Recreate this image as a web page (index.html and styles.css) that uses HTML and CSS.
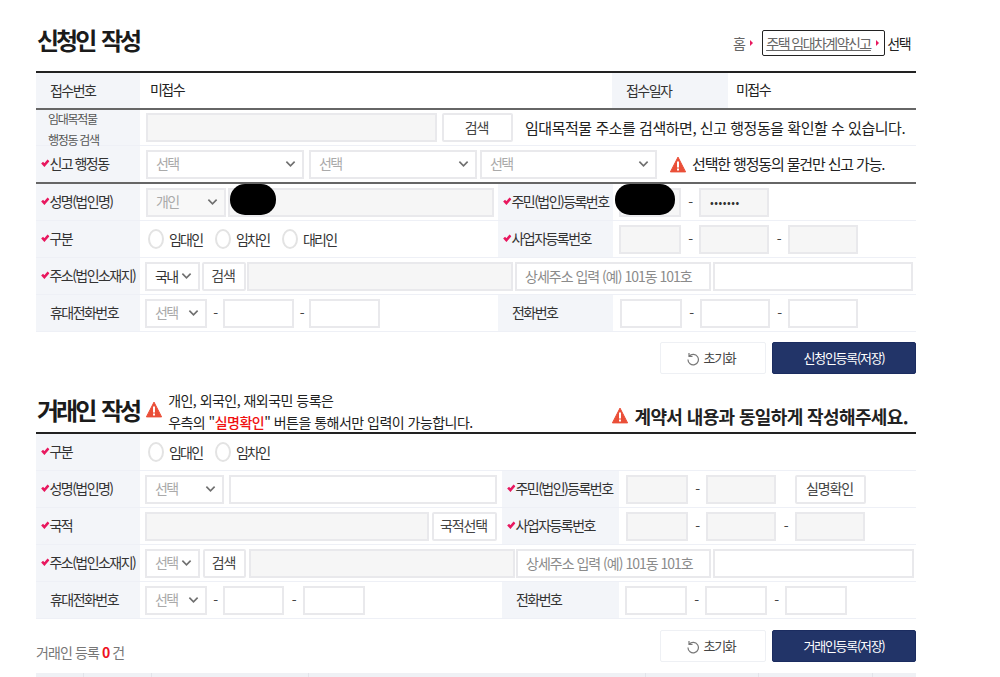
FILE: index.html
```html
<!DOCTYPE html>
<html lang="ko">
<head>
<meta charset="utf-8">
<title>신청인 작성</title>
<link rel="stylesheet" href="styles.css">
</head>
<body>
<svg class="defs" width="0" height="0" aria-hidden="true">
  <symbol id="chev" viewBox="0 0 12 8"><path d="M1.5 1.5 6 6l4.500-4.500" fill="none" stroke="#6f6f6f" stroke-width="1.800"/></symbol>
  <symbol id="chk" viewBox="0 0 10 9"><path d="M1.300 4 4 7 8.800 1.500" fill="none" stroke="#e8185f" stroke-width="3"/></symbol>
  <symbol id="warn" viewBox="0 0 16 16"><path d="M8 .6 15.600 15.400H.4Z" fill="#ea4f38" stroke="#ea4f38" stroke-linejoin="round"/><rect x="7" y="5" width="2" height="6" fill="#fff"/><rect x="7" y="12" width="2" height="2" fill="#fff"/></symbol>
  <symbol id="reset" viewBox="0 0 14 14"><path d="M3 1.500v3.500h3.500M3.200 4.800A5.200 5.200 0 1 1 2 8" fill="none" stroke="#777" stroke-width="1.200"/></symbol>
</svg>
<main class="page">
  <header class="head">
    <h1 class="title">신청인 작성</h1>
    <nav class="crumb">
      <span class="crumb-home">홈</span><i class="tri"></i>
      <a class="crumb-link" href="#"><u>주택 임대차계약신고</u><i class="tri"></i></a>
      <span class="crumb-cur">선택</span>
    </nav>
  </header>

  <section class="table top-line">
    <div class="row line-mid">
      <div class="th"><span class="tl pad">접수번호</span></div>
      <div class="val w-472">미접수</div>
      <div class="th th-116"><span class="tl pad">접수일자</span></div>
      <div class="val val-2">미접수</div>
    </div>
    <div class="row h-36">
      <div class="th th-stack"><span>임대목적물</span><span>행정동 검색</span></div>
      <input class="inp ro w-291 ml-6" readonly>
      <button class="btn w-71 ml-5">검색</button>
      <span class="notice ml-12">임대목적물 주소를 검색하면, 신고 행정동을 확인할 수 있습니다.</span>
    </div>
    <div class="row h-38 line-mid">
      <div class="th"><svg class="chk"><use href="#chk"/></svg><span class="tl">신고 행정동</span></div>
      <div class="sel w-158 ml-6"><span class="ph">선택</span><svg class="chev"><use href="#chev"/></svg></div>
      <div class="sel w-168 ml-5"><span class="ph">선택</span><svg class="chev"><use href="#chev"/></svg></div>
      <div class="sel w-177 ml-3"><span class="ph">선택</span><svg class="chev"><use href="#chev"/></svg></div>
      <svg class="warn ml-13"><use href="#warn"/></svg>
      <span class="notice tight ml-6">선택한 행정동의 물건만 신고 가능.</span>
    </div>
    <div class="row">
      <div class="th"><svg class="chk"><use href="#chk"/></svg><span class="tl">성명(법인명)</span></div>
      <div class="sel ro w-80 ml-6"><span class="ph">개인</span><svg class="chev"><use href="#chev"/></svg></div>
      <div class="redact ml-2"><input class="inp ro w-266" readonly><i class="blob blob-a"></i></div>
      <div class="th th-115 ml-4"><svg class="chk"><use href="#chk"/></svg><span class="tl">주민(법인)등록번호</span></div>
      <div class="redact ml-6"><input class="inp ro w-62" readonly><i class="blob blob-b"></i></div>
      <span class="dash w-18">-</span>
      <input class="inp ro pw w-70" readonly type="password" value="1234567">
    </div>
    <div class="row">
      <div class="th"><svg class="chk"><use href="#chk"/></svg><span class="tl">구분</span></div>
      <div class="radios wide"><label class="radio"><i></i>임대인</label><label class="radio"><i></i>임차인</label><label class="radio"><i></i>대리인</label></div>
      <div class="th th-115"><svg class="chk"><use href="#chk"/></svg><span class="tl">사업자등록번호</span></div>
      <input class="inp ro w-62 ml-6" readonly>
      <span class="dash w-18">-</span>
      <input class="inp ro w-70" readonly>
      <span class="dash w-19">-</span>
      <input class="inp ro w-70" readonly>
    </div>
    <div class="row">
      <div class="th"><svg class="chk"><use href="#chk"/></svg><span class="tl">주소(법인소재지)</span></div>
      <div class="sel w-55 ml-5"><span class="dark">국내</span><svg class="chev"><use href="#chev"/></svg></div>
      <button class="btn w-44 ml-2 dark">검색</button>
      <input class="inp ro w-266 ml-1" readonly>
      <input class="inp w-196 ml-2" placeholder="상세주소 입력 (예) 101동 101호">
      <input class="inp w-200 ml-2">
    </div>
    <div class="row">
      <div class="th"><span class="tl pad">휴대전화번호</span></div>
      <div class="sel w-62 ml-5"><span class="ph">선택</span><svg class="chev"><use href="#chev"/></svg></div>
      <span class="dash w-16">-</span>
      <input class="inp w-71" aria-label="휴대전화 가운데">
      <span class="dash w-15">-</span>
      <input class="inp w-71" aria-label="휴대전화 끝">
      <div class="th th-115 ml-118"><span class="tl pad">전화번호</span></div>
      <input class="inp w-62 ml-7" aria-label="전화 앞">
      <span class="dash w-18">-</span>
      <input class="inp w-70" aria-label="전화 가운데">
      <span class="dash w-18">-</span>
      <input class="inp w-70" aria-label="전화 끝">
    </div>
  </section>
  <div class="actions">
    <button class="act"><svg class="reset"><use href="#reset"/></svg><span class="act-t">초기화</span></button>
    <button class="act primary"><span class="act-t">신청인등록(저장)</span></button>
  </div>

  <header class="head2">
    <h2 class="title">거래인 작성</h2>
    <svg class="warn ml-7"><use href="#warn"/></svg>
    <p class="note">개인, 외국인, 재외국민 등록은<br>우측의 "<b>실명확인</b>" 버튼을 통해서만 입력이 가능합니다.</p>
    <svg class="warn push-r"><use href="#warn"/></svg>
    <strong class="strong">계약서 내용과 동일하게 작성해주세요.</strong>
  </header>

  <section class="table top-line">
    <div class="row">
      <div class="th"><svg class="chk"><use href="#chk"/></svg><span class="tl">구분</span></div>
      <div class="radios"><label class="radio"><i></i>임대인</label><label class="radio"><i></i>임차인</label></div>
    </div>
    <div class="row">
      <div class="th"><svg class="chk"><use href="#chk"/></svg><span class="tl">성명(법인명)</span></div>
      <div class="sel w-79 ml-5"><span class="ph">선택</span><svg class="chev"><use href="#chev"/></svg></div>
      <input class="inp w-268 ml-5" aria-label="성명">
      <div class="th th-117 ml-5"><svg class="chk"><use href="#chk"/></svg><span class="tl">주민(법인)등록번호</span></div>
      <input class="inp ro w-62 ml-7" readonly>
      <span class="dash w-18">-</span>
      <input class="inp ro w-70" readonly>
      <button class="btn w-71 ml-19">실명확인</button>
    </div>
    <div class="row">
      <div class="th"><svg class="chk"><use href="#chk"/></svg><span class="tl">국적</span></div>
      <input class="inp ro w-284 ml-5" readonly>
      <button class="btn w-65 ml-3">국적선택</button>
      <div class="th th-117 ml-5"><svg class="chk"><use href="#chk"/></svg><span class="tl">사업자등록번호</span></div>
      <input class="inp ro w-62 ml-7" readonly>
      <span class="dash w-18">-</span>
      <input class="inp ro w-70" readonly>
      <span class="dash w-19">-</span>
      <input class="inp ro w-70" readonly>
    </div>
    <div class="row">
      <div class="th"><svg class="chk"><use href="#chk"/></svg><span class="tl">주소(법인소재지)</span></div>
      <div class="sel w-55 ml-5"><span class="ph">선택</span><svg class="chev"><use href="#chev"/></svg></div>
      <button class="btn w-43 ml-3 dark">검색</button>
      <input class="inp ro w-266 ml-3" readonly>
      <input class="inp w-195 ml-1" placeholder="상세주소 입력 (예) 101동 101호">
      <input class="inp w-201 ml-2">
    </div>
    <div class="row">
      <div class="th"><span class="tl pad">휴대전화번호</span></div>
      <div class="sel w-62 ml-5"><span class="ph">선택</span><svg class="chev"><use href="#chev"/></svg></div>
      <span class="dash w-16">-</span>
      <input class="inp w-61" aria-label="휴대전화 가운데">
      <span class="dash w-19">-</span>
      <input class="inp w-62" aria-label="휴대전화 끝">
      <div class="th th-117 ml-137"><span class="tl pad">전화번호</span></div>
      <input class="inp w-62 ml-6" aria-label="전화 앞">
      <span class="dash w-18">-</span>
      <input class="inp w-62" aria-label="전화 가운데">
      <span class="dash w-18">-</span>
      <input class="inp w-62" aria-label="전화 끝">
    </div>
  </section>
  <div class="actions foot">
    <p class="count">거래인 등록 <b>0</b> 건</p>
    <button class="act"><svg class="reset"><use href="#reset"/></svg><span class="act-t">초기화</span></button>
    <button class="act primary"><span class="act-t">거래인등록(저장)</span></button>
  </div>
  <div class="strip"><i class="c48"></i><i class="c68"></i><i class="c157"></i><i class="c337"></i><i class="c113"></i><i class="c114"></i></div>
</main>
</body>
</html>
```
FILE: styles.css
```css
* { box-sizing: border-box; }
html, body { margin: 0; padding: 0; background: #fff; }
body {
  font-family: "Noto Sans CJK KR", "Noto Sans", sans-serif;
  font-size: 14px;
  letter-spacing: -1.55px;
  color: #333;
  overflow: hidden;
  height: 677px;
}
.defs { position: absolute; }
.page { width: 880px; margin-left: 36px; }

/* heads */
.head { height: 71px; display: flex; justify-content: space-between; align-items: center; padding-top: 9px; position: relative; }
.title { margin: 0; font-size: 24px; font-weight: 700; letter-spacing: -3px; word-spacing: 3px; color: #1b1b1b; line-height: 30px; padding-left: 1px; }
.crumb { display: flex; align-items: center; margin-right: 6px; margin-top: 5px; font-size: 14px; }
.crumb-home { color: #666; }
.tri { display: inline-block; width: 0; height: 0; margin: 0 0 0 6px; border-left: 3px solid #e8185f; border-top: 3px solid transparent; border-bottom: 3px solid transparent; }
.crumb-link { margin-left: 9px; height: 26px; width: 123px; padding-left: 3px; display: flex; align-items: center; border: 1px solid #222; border-radius: 2px; color: #666; white-space: nowrap; }
.crumb-link .tri { margin-left: 5px; }
.crumb-cur { margin-left: 2px; color: #222; }

/* table */
.top-line { border-top: 2px solid #222; }
.row { display: flex; align-items: center; height: 37px; border-bottom: 1px solid #eef0f6; }
.h-36 { height: 36px; }
.h-38 { height: 38px; }
.line-mid { border-bottom: 2px solid #666; }
.th { width: 104px; flex: none; align-self: stretch; background: #f3f5f9; display: flex; align-items: center; padding-left: 5px; white-space: nowrap; color: #333; }
.th-115 { width: 115px; }
.th-116 { width: 116px; }
.th-117 { width: 117px; }
.tl { line-height: 20px; margin-top: -2px; }
.pad { padding-left: 9px; }
.chk { width: 8.500px; height: 8px; flex: none; margin-top: -3px; }
.th-stack { flex-direction: column; align-items: flex-start; padding: 2px 0 0 12px; font-size: 12px; color: #555; justify-content: center; line-height: 21px; letter-spacing: -1.300px; }
.val { padding-left: 10px; color: #222; margin-top: -3px; }
.val-2 { padding-left: 8px; }
.w-472 { width: 472px; }

/* fields */
.inp { height: 29px; flex: none; border: 2px solid #e9e9ec; background: #fff; padding: 0 8px; font: inherit; letter-spacing: -1px; color: #333; outline: none; display: block; }
.inp::placeholder { color: #8b8b8b; opacity: 1; }
.ro { background: #f6f6f6; }
.pw { font-size: 11px; letter-spacing: .5px; padding-left: 9px; }
.sel { height: 29px; flex: none; border: 2px solid #e9e9ec; background: #fff; padding: 0 6px 0 8px; display: flex; justify-content: space-between; align-items: center; }
.sel.ro { background: #f8f8f8; }
.ph { color: #aaa; margin-top: -3px; }
.dark { color: #333; }
.chev { width: 11px; height: 8px; flex: none; }
.btn { height: 29px; flex: none; border: 2px solid #e9e9ec; border-radius: 2px; background: #fff; padding: 0 2px 2px 0; font: inherit; letter-spacing: -1.100px; color: #444; }
.dash { flex: none; text-align: center; color: #444; }
.redact { position: relative; flex: none; }
.blob { position: absolute; top: -4px; height: 31px; background: #000; border-radius: 15px; }
.blob-a { left: 2px; width: 46px; }
.blob-b { left: -4px; width: 60px; }
.notice { font-size: 15px; letter-spacing: -.47px; color: #222; white-space: nowrap; margin-top: -1px; }
.tight { letter-spacing: -1.150px; }
.warn { width: 16px; height: 17px; flex: none; }

.radios { display: flex; margin-left: 8px; }
.wide { width: 350px; flex: none; }
.radio { display: flex; align-items: center; gap: 5px; width: 67px; letter-spacing: -1.800px; }
.radio i { width: 16px; height: 20px; flex: none; border: 2px solid #e3e3e3; border-radius: 50%; background: #fff; display: block; }

/* actions */
.actions { height: 42px; display: flex; justify-content: flex-end; align-items: flex-end; gap: 6px; }
.act { width: 106px; height: 32px; border: 1px solid #eef0f4; border-radius: 2px; background: #fff; font: inherit; font-size: 13px; letter-spacing: -1.300px; color: #444; display: flex; align-items: center; justify-content: center; gap: 4px; padding: 0 5px 0 0; }
.act-t { margin-top: -2px; }
.primary { width: 144px; background: #223468; border-color: #1b2c60; color: #fff; padding: 0; }
.reset { width: 14px; height: 15px; }
.foot { height: 43px; }
.count { margin: 0 auto 0 0; font-size: 14px; color: #777; letter-spacing: -.9px; line-height: 20px; padding-bottom: 0; align-self: flex-end; }
.count b { color: #ee1122; }
.head2 { height: 58px; display: flex; align-items: flex-end; padding-bottom: 4px; margin-bottom: 0; }
.head2 .title { margin-bottom: 3px; }
.head2 .warn { margin-bottom: 10px; }
.head2 .push-r { margin-bottom: 4px; }
.note { margin: 0 0 -5px 6px; font-size: 14px; line-height: 22px; letter-spacing: -.52px; color: #222; white-space: nowrap; }
.note b { font-weight: 500; color: #f01010; }
.push-r { margin-left: auto; }
.strong { margin-left: 6px; font-size: 18px; font-weight: 700; letter-spacing: -.62px; color: #222; white-space: nowrap; padding-right: 8px; line-height: 24px; }
.strip { height: 4px; margin-top: 11px; background: #eff1f5; display: flex; }
.strip i { display: block; height: 100%; border-right: 1px solid #e2e4ea; }
.c48 { width: 48px; } .c68 { width: 68px; } .c157 { width: 157px; } .c337 { width: 337px; } .c113 { width: 113px; } .c114 { width: 114px; }

/* sizes */
.w-15 { width: 15px; } .w-16 { width: 16px; } .w-18 { width: 18px; } .w-19 { width: 19px; }
.w-43 { width: 43px; } .w-44 { width: 44px; } .w-55 { width: 55px; } .w-61 { width: 61px; } .w-62 { width: 62px; } .w-65 { width: 65px; }
.w-70 { width: 70px; } .w-71 { width: 71px; } .w-79 { width: 79px; } .w-80 { width: 80px; }
.w-158 { width: 158px; } .w-168 { width: 168px; } .w-177 { width: 177px; } .w-195 { width: 195px; } .w-196 { width: 196px; }
.w-200 { width: 200px; } .w-201 { width: 201px; } .w-266 { width: 266px; } .w-268 { width: 268px; }
.w-284 { width: 284px; } .w-291 { width: 291px; }
.ml-1 { margin-left: 1px; } .ml-2 { margin-left: 2px; } .ml-3 { margin-left: 3px; } .ml-4 { margin-left: 4px; }
.ml-5 { margin-left: 5px; } .ml-6 { margin-left: 6px; } .ml-7 { margin-left: 7px; }
.ml-12 { margin-left: 12px; } .ml-13 { margin-left: 13px; } .ml-19 { margin-left: 19px; } .ml-118 { margin-left: 118px; } .ml-137 { margin-left: 137px; }
```
